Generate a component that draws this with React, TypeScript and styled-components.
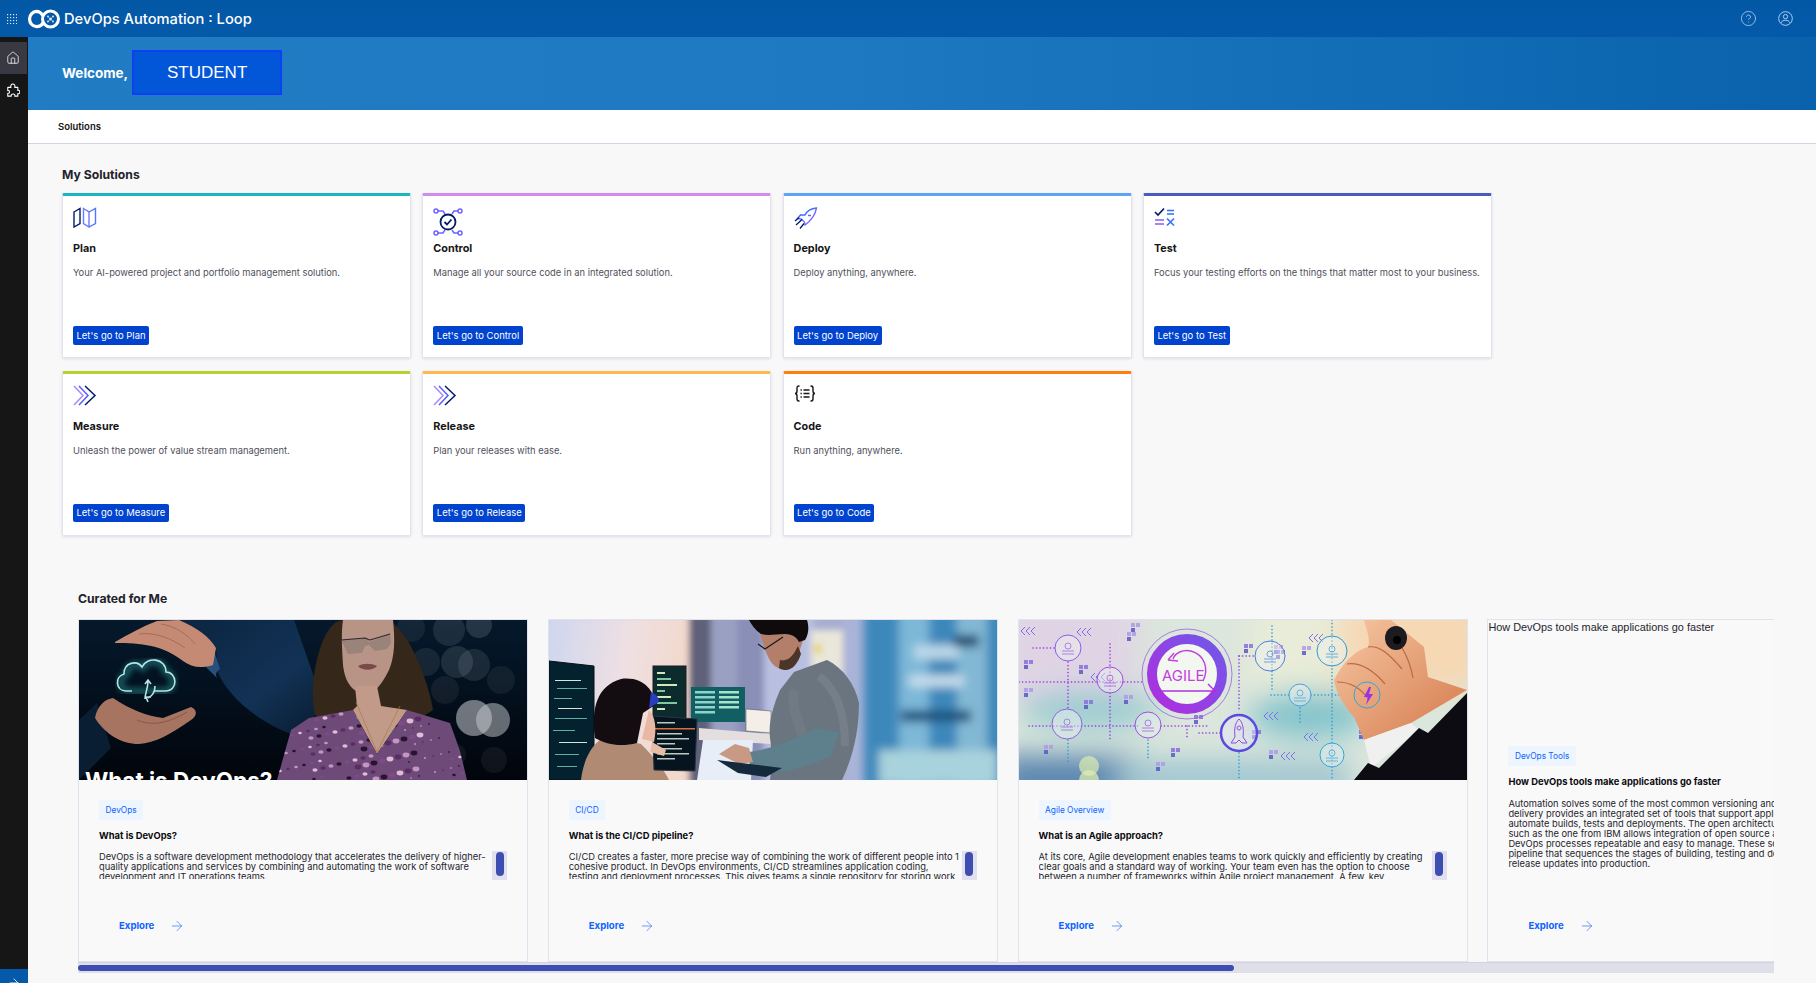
import React from "react";
import styled, { createGlobalStyle } from "styled-components";
import { ArrowRight, CircleHelp, House } from "lucide-react";

const GlobalStyle = createGlobalStyle`
  html, body, #root {
    margin: 0;
    height: 100%;
  }
  body {
    font-family: Inter, "Liberation Sans", sans-serif;
    background: #f8f8f9;
    color: #161616;
    overflow: hidden;
  }
  * {
    box-sizing: border-box;
  }
`;

const Page = styled.div`
  display: flex;
  flex-direction: column;
  height: 100vh;
  overflow: hidden;
`;

const TopBar = styled.header`
  display: flex;
  align-items: center;
  flex: 0 0 37px;
  padding-left: 7px;
  background: linear-gradient(180deg, #0358a6 0%, #0459a9 100%);
  color: #fff;
`;

const Brand = styled.div`
  display: flex;
  align-items: center;
  margin-left: 11px;
  gap: 4px;
  font-size: 14.7px;
  font-weight: 500;
`;

const TopActions = styled.div`
  display: flex;
  align-items: center;
  gap: 21px;
  margin-left: auto;
  padding-right: 23px;
  color: #b4d4f2;
`;

const Layout = styled.div`
  display: flex;
  flex: 1;
  min-height: 0;
`;

const SideNav = styled.nav`
  display: flex;
  flex-direction: column;
  flex: 0 0 28px;
  padding-top: 5px;
  background: #161616;
  color: #fff;
`;

const SideItem = styled.div<{ $active?: boolean }>`
  display: flex;
  align-items: center;
  justify-content: center;
  width: 27px;
  height: 32px;
  padding-right: 1px;
  background: ${(p) => (p.$active ? "#393944" : "transparent")};
`;

const SideExpand = styled.div`
  display: flex;
  justify-content: center;
  height: 14px;
  margin-top: auto;
  padding-top: 7px;
  overflow: hidden;
  background: #0459a9;
`;

const Main = styled.main`
  flex: 1;
  min-width: 0;
  overflow: hidden;
`;

const Banner = styled.section`
  display: flex;
  align-items: center;
  height: 73px;
  padding: 0 0 2px 34px;
  gap: 4px;
  background: linear-gradient(90deg, #217cc4 0%, #1e79c2 45%, #0a62ad 100%);
  color: #fff;
`;

const Welcome = styled.span`
  font-size: 13.5px;
  font-weight: 700;
`;

const UserBox = styled.div`
  display: flex;
  align-items: center;
  justify-content: center;
  width: 150px;
  height: 45px;
  background: #0256d8;
  border: 2px solid #0f3ff2;
  font-family: "Liberation Sans", sans-serif;
  font-size: 17px;
`;

const TabStrip = styled.div`
  display: flex;
  align-items: center;
  height: 34px;
  padding: 0 0 1px 30px;
  background: #fff;
  border-bottom: 1px solid #d4d3e2;
  font-size: 9.5px;
  font-weight: 600;
`;

const SolutionsSection = styled.section`
  padding: 23px 0 0 34px;
`;

const SectionTitle = styled.h2`
  margin: 0;
  font-size: 12.2px;
  line-height: 16px;
  font-weight: 700;
  color: #22222a;
`;

const SolutionGrid = styled.div`
  display: grid;
  grid-template-columns: repeat(4, 349px);
  grid-auto-rows: 165px;
  column-gap: 11.3px;
  row-gap: 12.5px;
  margin-top: 10px;
`;

const SolutionCard = styled.article<{ $accent: string }>`
  display: flex;
  flex-direction: column;
  padding: 11px 10px 12.5px;
  background: #fff;
  border: 1px solid #e3e3ee;
  border-top: 3px solid ${(p) => p.$accent};
  border-radius: 2px;
  box-shadow: 0 1px 3px rgba(60, 60, 110, 0.14);
`;

const IconSlot = styled.div`
  height: 31px;
`;

const CardTitle = styled.h3`
  margin: 4px 0 0;
  font-size: 10.8px;
  line-height: 14px;
  font-weight: 700;
`;

const CardText = styled.p`
  margin: 10px 0 0;
  font-size: 9.35px;
  line-height: 13px;
  white-space: nowrap;
  color: #50505c;
`;

const GoButton = styled.button`
  align-self: flex-start;
  height: 18.5px;
  margin-top: auto;
  padding: 0 3.5px;
  border: 0;
  border-radius: 2px;
  background: #0043ce;
  color: #fff;
  font-family: inherit;
  font-size: 9.45px;
`;

const CuratedSection = styled.section`
  padding: 55px 0 0 50px;
`;

const Carousel = styled.div`
  width: 1696px;
  margin-top: 12px;
  overflow: hidden;
`;

const CarouselTrack = styled.div`
  display: flex;
  gap: 19.8px;
`;

const StoryCard = styled.article`
  display: flex;
  flex-direction: column;
  flex: 0 0 449px;
  height: 343px;
  background: #f9f9fa;
  border: 1px solid #e2e2ed;
`;

const StoryMedia = styled.div`
  flex: 0 0 160px;
  overflow: hidden;
  svg {
    display: block;
  }
`;

const BrokenMedia = styled.div`
  flex: 0 0 106px;
  font-family: "Liberation Sans", Inter, sans-serif;
  font-size: 10.9px;
  line-height: 14px;
  white-space: nowrap;
  color: #26262e;
`;

const StoryBody = styled.div`
  display: flex;
  flex-direction: column;
  flex: 1;
  padding: 20px 0 27px 20px;
`;

const Tag = styled.span`
  align-self: flex-start;
  height: 20px;
  padding: 0 6.5px;
  background: #edf5ff;
  color: #0f62fe;
  font-size: 8.3px;
  line-height: 20px;
`;

const StoryTitle = styled.h4`
  margin: 10px 0 0;
  font-size: 9.4px;
  line-height: 12px;
  font-weight: 700;
  color: #0b0b0f;
`;

const ExcerptRow = styled.div<{ $loose?: boolean }>`
  display: flex;
  align-items: flex-start;
  margin-top: ${(p) => (p.$loose ? "11px" : "10px")};
`;

const Excerpt = styled.p<{ $clip?: boolean }>`
  flex: 0 0 393px;
  height: ${(p) => (p.$clip ? "27px" : "auto")};
  margin: 0;
  overflow: hidden;
  font-size: 9.3px;
  line-height: 10px;
  white-space: pre;
  color: #25252c;
`;

const MiniScroll = styled.div`
  display: flex;
  justify-content: center;
  flex: 0 0 15px;
  height: 29px;
  margin-top: -1px;
  padding-top: 1px;
  background: #e0e0ee;
`;

const MiniThumb = styled.div`
  width: 8px;
  height: 24px;
  border-radius: 4px;
  background: #3e4db1;
`;

const ExploreLink = styled.a`
  display: flex;
  align-items: center;
  gap: 15px;
  margin: auto 0 0 20px;
  color: #0f62fe;
  font-size: 9.6px;
  line-height: 12px;
  font-weight: 700;
`;

const ArrowMark = styled(ArrowRight)`
  color: #4b83f0;
`;

const HScroll = styled.div`
  width: 1696px;
  height: 11px;
  padding-top: 2px;
  background: #dfdfea;
  border-top: 1px solid #d3d3e0;
`;

const HThumb = styled.div<{ $width: number }>`
  width: ${(p) => p.$width}px;
  height: 6px;
  border-radius: 3px;
  background: #3e4db1;
`;

const GridIcon = () => (
  <svg width="10" height="10" viewBox="0 0 10 10" fill="#dbe9f7">
    {[0, 1, 2, 3].flatMap((row) =>
      [0, 1, 2, 3].map((col) => (
        <rect key={`${row}-${col}`} x={col * 3} y={row * 3} width="1.2" height="1.2" />
      ))
    )}
  </svg>
);

const LogoMark = () => (
  <svg width="32" height="20" viewBox="0 0 32 20" fill="none">
    <path
      d="M15.5 13.5c-1.8 2.6-4 4.2-7 4.2A7.4 7.4 0 0 1 1.6 10 7.4 7.4 0 0 1 8.5 2.4c3.6 0 5.4 2.4 7.1 5.2"
      stroke="#fff"
      strokeWidth="3.2"
    />
    <circle cx="22.5" cy="10" r="8" stroke="#fff" strokeWidth="3" />
    <path d="M20 7.5l5 5M25 7.5l-5 5" stroke="#8db8e6" strokeWidth="0.8" />
    <g fill="#cfe2f6">
      <circle cx="22.5" cy="10" r="1.5" />
      <circle cx="20" cy="7.5" r="1" />
      <circle cx="25" cy="7.5" r="1" />
      <circle cx="20" cy="12.5" r="1" />
      <circle cx="25" cy="12.5" r="1" />
    </g>
  </svg>
);

const AvatarIcon = () => (
  <svg width="15" height="15" viewBox="0 0 16 16" fill="none" stroke="currentColor" strokeWidth="1">
    <circle cx="8" cy="8" r="7.3" />
    <circle cx="8" cy="6" r="2.3" />
    <path d="M3.5 12.5c.5-1.7 2-2.6 4.5-2.6s4 .9 4.5 2.6" />
  </svg>
);

const PuzzleIcon = () => (
  <svg width="14" height="14" viewBox="0 0 16 16" fill="none" stroke="currentColor" strokeWidth="1.2" strokeLinejoin="round">
    <path d="M2 5h3.600C5 3 6 1.200 7.800 1.200S10.600 3 10 5h3.500v3.500c1.600-.6 2.300.4 2.300 1.800s-.8 2.400-2.300 1.800V15H10c.5-1.700-.4-2.500-1.800-2.500S5.600 13.300 6 15H2v-3.400c1.300.5 2-.3 2-1.400S3.300 8.200 2 8.700z" />
  </svg>
);

const PlanIcon = () => (
  <svg width="24" height="21" viewBox="0 0 24 21" fill="none" strokeWidth="1.4">
    <path d="M1 5l6-3.500v15L1 20z" stroke="#001d6c" />
    <path d="M10.500 1.500l5.500 3.500v15l-5.500-3.500z" stroke="#6f7cff" />
    <path d="M16 5l6.500-3.500v15L16 20" stroke="#4f77ff" />
  </svg>
);

const ControlIcon = () => (
  <svg width="30" height="30" viewBox="0 0 30 30" fill="none">
    <g stroke="#6d63ff" strokeWidth="1.5">
      <circle cx="3" cy="4" r="2" />
      <circle cx="27" cy="4" r="2" />
      <circle cx="3" cy="26" r="2" />
      <circle cx="27" cy="26" r="2" />
      <path d="M5 4h5l2 3M25 4h-4l-2 3M5 26h5l2-3M25 26h-4l-2-3" />
    </g>
    <circle cx="15" cy="15" r="7.5" stroke="#001d6c" strokeWidth="1.8" />
    <path d="M11.5 15l2.5 2.5 4.500-5" stroke="#001d6c" strokeWidth="1.8" />
  </svg>
);

const DeployIcon = () => (
  <svg width="24" height="23" viewBox="0 0 24 23" fill="none">
    <defs>
      <linearGradient id="rocket-grad" x1="0" y1="0" x2="1" y2="1">
        <stop offset="0" stopColor="#0f62fe" />
        <stop offset="1" stopColor="#a56eff" />
      </linearGradient>
    </defs>
    <path
      d="M22.500 1c-6 .5-9.500 3-11.500 7H6.500L3.500 11.500l4 .5 3 3 .5 3 3-2.500c3.500-3 7-7 8.500-14.500zM14 8.500h3"
      stroke="url(#rocket-grad)"
      strokeWidth="1.3"
    />
    <path d="M1 14l4-3.500M2 18l6-5.500M6 21.500l4-5" stroke="#001d6c" strokeWidth="1.3" />
  </svg>
);

const TestIcon = () => (
  <svg width="21" height="20" viewBox="0 0 21 20" fill="none" strokeWidth="1.7">
    <path d="M1 5l3 3 6-6.500" stroke="#001d6c" />
    <path d="M13 3.500h7M13 7h7" stroke="#2f6bff" />
    <path d="M1 13h9M1 17h9" stroke="#8a5cff" />
    <path d="M13 11.500l7 7M20 11.500l-7 7" stroke="#3f72ff" />
  </svg>
);

const ChevronsIcon = () => (
  <svg width="24" height="21" viewBox="0 0 24 21" fill="none" strokeWidth="1.5">
    <path d="M1 1l9 9.500-9 9.500" stroke="#a78bff" />
    <path d="M6 1l9 9.500-9 9.500" stroke="#5b5cff" />
    <path d="M12 1l10 9.500-10 9.500" stroke="#001d6c" />
  </svg>
);

const CodeIcon = () => (
  <svg width="22" height="17" viewBox="0 0 22 17" fill="none" stroke="#161616" strokeWidth="1.4">
    <path d="M5.500 1H4.800C3.400 1 3 2 3 3.500V6C3 7.400 2.400 8.500 1 8.500c1.400 0 2 1.100 2 2.500v2.500C3 15 3.400 16 4.800 16h.7" />
    <path d="M16.500 1h.7C18.600 1 19 2 19 3.500V6c0 1.400.6 2.500 2 2.500-1.400 0-2 1.100-2 2.500v2.500c0 1.500-.4 2.500-1.800 2.500h-.7" />
    <path d="M9.500 5h6M9.500 8.500h6M9.500 12h6" />
    <path d="M6.500 5h1.300M6.500 8.500h1.300M6.500 12h1.300" strokeWidth="1.6" />
  </svg>
);

const dressSpots = Array.from({ length: 130 }, (_, i) => ({
  x: 200 + ((i * 47) % 190),
  y: 94 + ((i * 29) % 66),
  r: 1 + (i % 4) * 0.8,
  c: ["#2a1230", "#c596c4", "#5b2c64", "#e0bcd8", "#7d4a8a"][i % 5],
}));

const bokeh = [
  [332, 8, 14, 0.08], [370, 10, 16, 0.12], [400, 5, 13, 0.16], [347, 42, 14, 0.1],
  [378, 42, 16, 0.14], [395, 45, 16, 0.12], [366, 70, 14, 0.08], [395, 98, 18, 0.55],
  [414, 100, 17, 0.5], [422, 60, 14, 0.08], [415, 140, 13, 0.07], [375, 135, 12, 0.07],
];

const DevOpsScene = () => (
  <svg width="448" height="160" viewBox="0 0 448 160">
    <defs>
      <linearGradient id="dv-bg" x1="0" y1="0" x2="0" y2="1">
        <stop offset="0" stopColor="#05192c" />
        <stop offset="1" stopColor="#01050b" />
      </linearGradient>
      <linearGradient id="dv-sleeve" x1="0" y1="0" x2="1" y2="1">
        <stop offset="0" stopColor="#0b2440" />
        <stop offset="0.6" stopColor="#123255" />
        <stop offset="1" stopColor="#081a2e" />
      </linearGradient>
      <filter id="dv-glow">
        <feGaussianBlur stdDeviation="3" />
      </filter>
      <clipPath id="dv-dress">
        <path d="M198 160l14-50 18-12 44-8 24 44 30-44 43 13 10 28 7 29z" />
      </clipPath>
    </defs>
    <rect width="448" height="160" fill="url(#dv-bg)" />
    <path d="M95 0h120l28 80-18 38c-40-10-75-40-86-65l-2-25c-14-12-28-20-42-28z" fill="url(#dv-sleeve)" />
    <path d="M133 24l8 25c-6 4-4 8-2 10l-14-14z" fill="#2a4f7c" />
    <path d="M0 100l18-17 14 45-32 32z" fill="#091d33" />
    <path
      d="M36 22c14-8 28-16 42-21l22-1c18 8 30 16 37 28l-3 17c-12 4-22 2-30-4-20-16-42-18-68-18z"
      fill="#c48a74"
    />
    <path d="M60 14c16-2 32 4 46 14M82 4c14 2 26 10 34 20" fill="none" stroke="#9c6452" strokeWidth="0.8" />
    <path
      d="M16 98c2-12 10-19 18-20 18 12 34 18 50 20l28-11c7 3 6 9 0 13-20 14-36 23-52 24-18 0-34-10-44-26z"
      fill="#a87462"
    />
    <path d="M58 100c14 6 30 4 50-8" fill="none" stroke="#7f5142" strokeWidth="0.8" />
    <g fill="none" stroke="#2fb0b0" strokeWidth="5" filter="url(#dv-glow)" opacity="0.6">
      <path d="M50 71c-10 0-12-14-2-17 0-10 12-12 16-6 4-10 22-8 22 4 10 0 12 19-2 19z" />
    </g>
    <g fill="none" stroke="#b7e4e4" strokeWidth="1.6">
      <path d="M53 71h-6c-10 0-12-14-2-17 0-12 13-14 18-7 5-11 24-9 24 5 11 0 13 19-1 19H75" />
      <path d="M66 79c0-6 3-10 3-18m-3 3l3-4 3 4M76 66c0 8-4 10-7 12m0 4l-2-5 5 0" />
    </g>
    {bokeh.map(([cx, cy, r, o], i) => (
      <circle key={i} cx={cx} cy={cy} r={r} fill="#c8ccd2" opacity={o} />
    ))}
    <path d="M236 95c-8-30 6-95 28-95h46c22 14 40 64 44 90-14 10-30 16-58 16-26 0-50-2-60-11z" fill="#352719" />
    <path d="M264 0h50c2 20 2 36-4 50-8 16-14 23-24 23-12 0-20-10-22-28-1-18-2-32 0-45z" fill="#b89487" />
    <path d="M276 66h22l4 20 26 4-30 44-24-44 4-4z" fill="#c29a8a" />
    <path d="M262 20l24-2 4 4 21-8 1 9-4 6-12 2-6-6-4 1-3 7-14 1z" fill="#82746f" opacity="0.55" />
    <path d="M262 20l24-2c3 1 3 2 5 2l20-6" stroke="#33262a" strokeWidth="1.2" fill="none" />
    <path d="M279 46c6-3 13-3 19 0-4 5-15 5-19 0z" fill="#7a4a48" />
    <path d="M198 160l14-50 18-12 44-8 24 44 30-44 43 13 10 28 7 29z" fill="#6e4a78" />
    <g clipPath="url(#dv-dress)">
      {dressSpots.map((s, i) => (
        <ellipse key={i} cx={s.x} cy={s.y} rx={s.r} ry={s.r * 0.7} fill={s.c} />
      ))}
    </g>
    <path d="M277 82l21 50 23-46" fill="none" stroke="#a67c3e" strokeWidth="0.7" />
    <text x="6" y="169" fill="#fff" fontFamily="Inter, sans-serif" fontSize="22.5" fontWeight="700">
      What is DevOps?
    </text>
  </svg>
);

const codeLines = [
  [6, 60, 26], [8, 68, 30], [5, 78, 18], [9, 88, 24], [6, 98, 32], [4, 110, 22], [10, 122, 28], [6, 134, 24], [8, 146, 20],
];

const PipelineScene = () => (
  <svg width="448" height="160" viewBox="0 0 448 160">
    <defs>
      <linearGradient id="pl-left" x1="0" y1="0" x2="1" y2="0.2">
        <stop offset="0" stopColor="#ccd6f0" />
        <stop offset="0.6" stopColor="#efe0e2" />
        <stop offset="1" stopColor="#f3d8cc" />
      </linearGradient>
      <filter id="pl-blur">
        <feGaussianBlur stdDeviation="3" />
      </filter>
      <filter id="pl-blur-big">
        <feGaussianBlur stdDeviation="5" />
      </filter>
    </defs>
    <rect width="448" height="160" fill="#a9aed0" />
    <g filter="url(#pl-blur)">
      <rect x="-5" y="-5" width="145" height="175" fill="url(#pl-left)" />
      <rect x="140" y="-5" width="22" height="170" fill="#5e6079" />
      <rect x="162" y="-5" width="26" height="170" fill="#9aa0c2" />
      <rect x="188" y="-5" width="30" height="170" fill="#8a8fb8" />
      <rect x="215" y="-5" width="50" height="170" fill="#b9bfe0" />
      <rect x="262" y="10" width="32" height="80" fill="#e9e6da" />
      <ellipse cx="269" cy="29" rx="4" ry="5" fill="#e6d250" />
      <rect x="295" y="-5" width="25" height="170" fill="#aab4d8" />
    </g>
    <g filter="url(#pl-blur-big)">
      <rect x="315" y="-10" width="145" height="180" fill="#3d88bb" />
      <rect x="350" y="-10" width="30" height="180" fill="#7db8d8" />
      <rect x="408" y="-10" width="30" height="180" fill="#82b8d4" />
      <rect x="365" y="25" width="45" height="14" fill="#bcd8e8" />
      <rect x="360" y="55" width="55" height="12" fill="#c4dcea" />
      <rect x="352" y="90" width="70" height="12" fill="#1e527f" />
      <rect x="405" y="15" width="25" height="12" fill="#1b466e" />
      <rect x="330" y="130" width="118" height="35" fill="#a8d2dc" />
    </g>
    <rect x="104" y="46" width="33" height="56" fill="#0c2b2c" stroke="#1b1c24" />
    {[52, 58, 64, 70, 76, 82, 88].map((y, i) => (
      <rect key={y} x="108" y={y} width={8 + (i % 3) * 6} height="2" fill={i % 2 ? "#7cc8a0" : "#d0e8b8"} />
    ))}
    <rect x="142" y="67" width="54" height="35" fill="#125f63" />
    {[71, 76, 81, 86, 91].map((y) => (
      <rect key={y} x="146" y={y} width="20" height="2.5" fill="#8fd4cc" />
    ))}
    {[71, 76, 81, 86].map((y) => (
      <rect key={y} x="170" y={y} width="20" height="2.5" fill="#a8e4cc" />
    ))}
    <path d="M197 89l25 2v22l-25-2z" fill="#f3efe8" stroke="#444" strokeWidth="0.5" />
    <path d="M150 108l72 6v10l-72-4z" fill="#e4dedf" />
    <path d="M0 41l45 5v114H0z" fill="#04212f" stroke="#0a0f16" />
    {codeLines.map(([x, y, w], i) => (
      <rect key={i} x={x} y={y} width={w} height="1" fill={i % 3 ? "#5fb0a0" : "#d4e8d0"} />
    ))}
    <path d="M32 160c2-18 10-38 26-44l34 8c12 12 22 24 28 36z" fill="#b08a72" />
    <path d="M103 96l45 3-2 52-41-1z" fill="#06141f" stroke="#2a3540" />
    <rect x="106" y="108" width="40" height="1.5" fill="#d8703a" />
    {[102, 113, 118, 123, 128, 133, 138].map((y, i) => (
      <rect key={y} x="108" y={y} width={18 + (i % 3) * 7} height="1.5" fill="#b8ccc0" />
    ))}
    <path d="M100 90c6 6 8 18 5 32l-12-3z" fill="#e8b8a4" />
    <path d="M46 118c-4-30 2-52 26-59 22-3 34 12 34 26l-12 8-6 30c-16 4-30 2-42-5z" fill="#130c10" />
    <path d="M102 72c4 2 8 4 8 10l-10 6z" fill="#2a3cc0" />
    <path d="M103 122l14 8-2 6-14-4z" fill="#e8bda6" />
    <path d="M154 120h50l-2 40h-54z" fill="#e8eef8" />
    <path d="M231 70l14-18 33-12c16 8 28 24 32 43 0 30-7 56-17 77h-72c2-16 2-28 0-42-2-16 4-34 10-48z" fill="#6b7580" />
    <path d="M270 56c16 12 26 34 26 70" stroke="#8a929c" strokeWidth="8" fill="none" opacity="0.35" />
    <path d="M245 70c-4 20 6 30 8 46" stroke="#7e8892" strokeWidth="10" fill="none" opacity="0.3" />
    <path d="M198 132c24-2 50-14 70-24l22 4-8 24c-22 10-56 22-80 14z" fill="#5e7f8c" />
    <path d="M170 134l16-10 14 4 4 14-14 2z" fill="#c89a84" />
    <path d="M168 140l65 8-16 9-28-4z" fill="#142a3c" />
    <path d="M211 14c4 12 8 30 18 34 8 4 16 0 20-12l5-16V4h-38z" fill="#b47f6a" />
    <path d="M231 40c8 2 13-4 18-14l3 8c-4 12-12 20-22 14z" fill="#4a3528" />
    <path d="M200 0h58c2 6 2 14-2 20l-6 2c-2-4-6-8-14-8-10 0-16 2-24 0-6-4-10-10-12-14z" fill="#0f0a0c" />
    <path d="M209 24l7 5 18-12" stroke="#1a1a20" strokeWidth="1.3" fill="none" />
  </svg>
);

const pixelBlocks = [
  [112, 3], [5, 40], [108, 12], [225, 24], [283, 26], [60, 45], [5, 68], [65, 80], [105, 75], [175, 95],
  [25, 125], [152, 128], [137, 142], [340, 110], [250, 130], [233, 110], [255, 25], [257, 30],
];

const purpleDots = [
  "M0 62H125",
  "M10 106H120",
  "M49 42V90",
  "M91 24V120",
  "M14 28H36",
  "M142 106H190",
  "M168 106V120",
  "M180 113H202",
  "M220 36V90",
  "M220 36H235",
];

const blueDots = [
  "M253 6V70",
  "M252 75H270",
  "M313 0V160",
  "M292 75H410",
  "M281 88V105",
  "M220 133V160",
  "M129 120V140",
  "M49 120V142",
];

const agileRings = [
  { cx: 49, cy: 28, r: 13, color: "#8e5de8" },
  { cx: 91, cy: 60, r: 13, color: "#a050e0" },
  { cx: 48, cy: 104, r: 15, color: "#9060e0" },
  { cx: 129, cy: 105, r: 13, color: "#a050e0" },
  { cx: 251, cy: 36, r: 15, color: "#4a7de0" },
  { cx: 313, cy: 31, r: 15, color: "#2c9ad8" },
  { cx: 281, cy: 75, r: 11, color: "#4aa0d8" },
  { cx: 313, cy: 135, r: 12, color: "#30a8d8" },
];

const AgileScene = () => (
  <svg width="448" height="160" viewBox="0 0 448 160">
    <defs>
      <linearGradient id="ag-ring" x1="0" y1="1" x2="1" y2="0">
        <stop offset="0" stopColor="#b02ee0" />
        <stop offset="1" stopColor="#7058e8" />
      </linearGradient>
      <linearGradient id="ag-hand" x1="0" y1="0" x2="1" y2="1">
        <stop offset="0" stopColor="#f6c8a4" />
        <stop offset="1" stopColor="#d5784a" />
      </linearGradient>
      <filter id="ag-blur">
        <feGaussianBlur stdDeviation="14" />
      </filter>
    </defs>
    <rect width="448" height="160" fill="#dbe6dc" />
    <g filter="url(#ag-blur)">
      <rect x="-20" y="-20" width="140" height="100" fill="#e0d4e4" />
      <rect x="230" y="-20" width="120" height="90" fill="#e8ecd8" />
      <rect x="320" y="-20" width="150" height="90" fill="#f6d8b4" />
      <ellipse cx="70" cy="90" rx="70" ry="20" fill="#9accd0" />
      <ellipse cx="290" cy="95" rx="60" ry="24" fill="#84c4cc" />
      <rect x="-20" y="135" width="140" height="50" fill="#5c86b0" />
      <rect x="100" y="140" width="230" height="40" fill="#a0c6d0" />
    </g>
    <circle cx="70" cy="146" r="10" fill="#dcecb0" opacity="0.7" />
    <circle cx="70" cy="160" r="10" fill="#e4f0b0" opacity="0.7" />
    <g fill="none" stroke="#9a30e8" strokeWidth="1.6" strokeLinecap="round" strokeDasharray="0.1 3.4">
      {purpleDots.map((d) => (
        <path key={d} d={d} />
      ))}
    </g>
    <g fill="none" stroke="#1c9ed8" strokeWidth="1.6" strokeLinecap="round" strokeDasharray="0.1 3.4">
      {blueDots.map((d) => (
        <path key={d} d={d} />
      ))}
    </g>
    {pixelBlocks.map(([x, y], i) => (
      <g key={i} fill={i % 2 ? "#8a6ee0" : "#b09ae8"} opacity="0.85">
        <rect x={x} y={y} width="4" height="4" />
        <rect x={x + 5} y={y} width="4" height="4" />
        <rect x={x} y={y + 5} width="4" height="4" fill="#5a58c8" />
      </g>
    ))}
    {[[58, 8], [2, 7], [72, 53], [245, 92], [290, 14], [345, 29], [285, 113], [262, 132]].map(([x, y]) => (
      <path key={`${x}-${y}`} d={`M${x + 4} ${y}l-4 4 4 4M${x + 9} ${y}l-4 4 4 4M${x + 14} ${y}l-4 4 4 4`} fill="none" stroke="#7f6ee8" strokeWidth="1" />
    ))}
    <circle cx="168" cy="54" r="45" fill="none" stroke="#9a60e0" strokeWidth="0.8" />
    <circle cx="168" cy="54" r="35" fill="#f2f8f0" stroke="url(#ag-ring)" strokeWidth="10" />
    <text x="143" y="61" fill="#c63ee0" fontFamily="Inter, sans-serif" fontSize="15">
      AGILE
    </text>
    <path d="M154 39c2-6 10-10 18-8 14 4 18 18 12 30M149 40l6-7M149 40l10 1" fill="none" stroke="#c63ee0" strokeWidth="1.4" />
    <path d="M142 71h53M189 64l7 7-7 7" fill="none" stroke="#b030e0" strokeWidth="1.4" />
    {agileRings.map(({ cx, cy, r, color }) => (
      <g key={`${cx}-${cy}`}>
        <circle cx={cx} cy={cy} r={r} fill="#eef2f0" fillOpacity="0.45" stroke={color} strokeWidth="1" />
        <circle cx={cx} cy={cy - 2} r="3" fill="none" stroke={color} strokeWidth="0.7" />
        <path d={`M${cx - 6} ${cy + 6}h12M${cx - 6} ${cy + 3}h12`} fill="none" stroke={color} strokeWidth="0.7" />
      </g>
    ))}
    <circle cx="220" cy="113" r="18" fill="#e6e6f4" fillOpacity="0.5" stroke="#5a4ae0" strokeWidth="2.5" />
    <path d="M220 99c4 4 5 10 4 18l4 6h-5l-3-3-3 3h-5l4-6c-1-8 0-14 4-18zM220 106a2 2 0 1 0 .1 0" fill="none" stroke="#8f4ae0" strokeWidth="1" />
    <path d="M345 0c2 8 7 20 4 27-11 3-24 13-34 33 1 12 13 30 20 37l10 23 47-17 56-33-39-13-4-30-33-27z" fill="url(#ag-hand)" />
    <path d="M349 27c12-2 22 8 34 22M328 44c14-2 26 6 38 20M318 62c14 0 24 6 32 18M382 26c6 10 10 20 12 32" fill="none" stroke="#b86a44" strokeWidth="1.2" />
    <circle cx="348" cy="75" r="13" fill="none" stroke="#30a8d8" strokeWidth="1" />
    <path d="M350 67l-5 10h4l-2 8 7-11h-4l2-7z" fill="#9a30e8" />
    <ellipse cx="377" cy="18" rx="11" ry="12" fill="#1c1c20" />
    <circle cx="378" cy="20" r="4" fill="#000" />
    <path d="M345 120l47-17 8 7-48 38z" fill="#f0f0f0" />
    <path d="M335 160l14-17 11 5 40-40 9 5 39-40v87z" fill="#0c0c12" />
  </svg>
);

const solutions = [
  { name: "Plan", accent: "#1ab5c1", icon: <PlanIcon />, text: "Your AI-powered project and portfolio management solution." },
  { name: "Control", accent: "#d08bef", icon: <ControlIcon />, text: "Manage all your source code in an integrated solution." },
  { name: "Deploy", accent: "#5ea3f5", icon: <DeployIcon />, text: "Deploy anything, anywhere." },
  { name: "Test", accent: "#4a5bbd", icon: <TestIcon />, text: "Focus your testing efforts on the things that matter most to your business." },
  { name: "Measure", accent: "#b8d030", icon: <ChevronsIcon />, text: "Unleash the power of value stream management." },
  { name: "Release", accent: "#ffb84d", icon: <ChevronsIcon />, text: "Plan your releases with ease." },
  { name: "Code", accent: "#ff7f0e", icon: <CodeIcon />, text: "Run anything, anywhere." },
];

const stories = [
  {
    tag: "DevOps",
    title: "What is DevOps?",
    media: <DevOpsScene />,
    text: "DevOps is a software development methodology that accelerates the delivery of higher-\nquality applications and services by combining and automating the work of software\ndevelopment and IT operations teams.",
  },
  {
    tag: "CI/CD",
    title: "What is the CI/CD pipeline?",
    media: <PipelineScene />,
    text: "CI/CD creates a faster, more precise way of combining the work of different people into 1\ncohesive product. In DevOps environments, CI/CD streamlines application coding,\ntesting and deployment processes. This gives teams a single repository for storing work",
  },
  {
    tag: "Agile Overview",
    title: "What is an Agile approach?",
    media: <AgileScene />,
    text: "At its core, Agile development enables teams to work quickly and efficiently by creating\nclear goals and a standard way of working. Your team even has the option to choose\nbetween a number of frameworks within Agile project management. A few, key",
  },
  {
    tag: "DevOps Tools",
    title: "How DevOps tools make applications go faster",
    altText: "How DevOps tools make applications go faster",
    text: "Automation solves some of the most common versioning and integration issues. Continuous\ndelivery provides an integrated set of tools that support application development and\nautomate builds, tests and deployments. The open architecture of a DevOps platform\nsuch as the one from IBM allows integration of open source and commercial tools, making\nDevOps processes repeatable and easy to manage. These solutions create a continuous\npipeline that sequences the stages of building, testing and delivering software to\nrelease updates into production.",
  },
];

const App = () => {
  return (
    <Page>
      <GlobalStyle />
      <TopBar>
        <GridIcon />
        <Brand>
          <LogoMark />
          DevOps Automation : Loop
        </Brand>
        <TopActions>
          <CircleHelp size={17} strokeWidth={1.1} />
          <AvatarIcon />
        </TopActions>
      </TopBar>
      <Layout>
        <SideNav>
          <SideItem $active>
            <House size={14} strokeWidth={1.3} />
          </SideItem>
          <SideItem>
            <PuzzleIcon />
          </SideItem>
          <SideExpand>
            <ArrowRight size={14} strokeWidth={1.5} />
          </SideExpand>
        </SideNav>
        <Main>
          <Banner>
            <Welcome>Welcome,</Welcome>
            <UserBox>STUDENT</UserBox>
          </Banner>
          <TabStrip>Solutions</TabStrip>
          <SolutionsSection>
            <SectionTitle>My Solutions</SectionTitle>
            <SolutionGrid>
              {solutions.map((item) => (
                <SolutionCard key={item.name} $accent={item.accent}>
                  <IconSlot>{item.icon}</IconSlot>
                  <CardTitle>{item.name}</CardTitle>
                  <CardText>{item.text}</CardText>
                  <GoButton>Let's go to {item.name}</GoButton>
                </SolutionCard>
              ))}
            </SolutionGrid>
          </SolutionsSection>
          <CuratedSection>
            <SectionTitle>Curated for Me</SectionTitle>
            <Carousel>
              <CarouselTrack>
                {stories.map((story) => (
                  <StoryCard key={story.tag}>
                    {story.media ? (
                      <StoryMedia>{story.media}</StoryMedia>
                    ) : (
                      <BrokenMedia>{story.altText}</BrokenMedia>
                    )}
                    <StoryBody>
                      <Tag>{story.tag}</Tag>
                      <StoryTitle>{story.title}</StoryTitle>
                      <ExcerptRow $loose={!story.media}>
                        <Excerpt $clip={!!story.media}>{story.text}</Excerpt>
                        {story.media && (
                          <MiniScroll>
                            <MiniThumb />
                          </MiniScroll>
                        )}
                      </ExcerptRow>
                      <ExploreLink>
                        Explore
                        <ArrowMark size={16} strokeWidth={1.2} />
                      </ExploreLink>
                    </StoryBody>
                  </StoryCard>
                ))}
              </CarouselTrack>
            </Carousel>
            <HScroll>
              <HThumb $width={1156} />
            </HScroll>
          </CuratedSection>
        </Main>
      </Layout>
    </Page>
  );
};

export default App;
